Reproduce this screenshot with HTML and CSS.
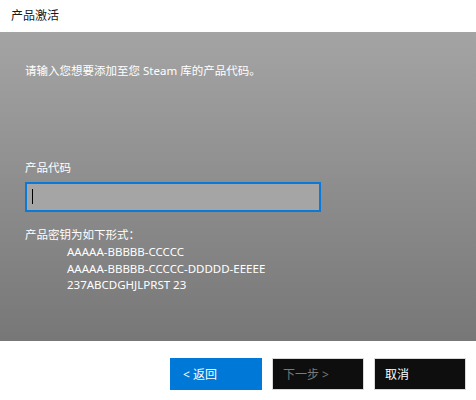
FILE: index.html
```html
<!DOCTYPE html>
<html lang="zh-CN">
<head>
<meta charset="utf-8">
<title>产品激活</title>
<link rel="stylesheet" href="styles.css">
</head>
<body>
<div class="dialog">
  <header class="titlebar">产品激活</header>
  <main class="content">
    <p class="intro">请输入您想要添加至您 Steam 库的产品代码。</p>
    <label class="field-label" for="code">产品代码</label>
    <div class="input-box"><span class="caret"></span></div>
    <p class="format-heading">产品密钥为如下形式：</p>
    <div class="formats">
      <div>AAAAA-BBBBB-CCCCC</div>
      <div>AAAAA-BBBBB-CCCCC-DDDDD-EEEEE</div>
      <div>237ABCDGHJLPRST 23</div>
    </div>
  </main>
  <footer class="actions">
    <button class="btn btn-primary">&lt; 返回</button>
    <button class="btn btn-dark btn-disabled">下一步 &gt;</button>
    <button class="btn btn-dark">取消</button>
  </footer>
</div>
</body>
</html>
```
FILE: styles.css
```css
* { box-sizing: border-box; }
html, body {
  margin: 0;
  padding: 0;
  background: #ffffff;
}
body {
  font-family: "Noto Sans", "Noto Sans CJK SC", sans-serif;
  font-size: 11.5px;
}
.dialog {
  width: 476px;
  height: 400px;
  display: flex;
  flex-direction: column;
}
.titlebar {
  height: 32px;
  padding: 8px 0 0 11px;
  line-height: 16px;
  color: #1a1a1a;
  background: #ffffff;
  font-size: 12px;
}
.content {
  height: 309px;
  background: linear-gradient(to bottom, #a4a4a4 0%, #777777 100%);
  padding: 31px 0 0 25px;
  color: #ffffff;
  display: flex;
  flex-direction: column;
}
.intro {
  margin: 0;
  line-height: 16px;
  height: 16px;
}
.field-label {
  display: block;
  margin-top: 81px;
  line-height: 16px;
  height: 16px;
}
.input-box {
  margin-top: 6px;
  width: 296px;
  height: 30px;
  border: 2px solid #0a79d8;
  background: #a5a5a5;
  padding: 5px 0 0 5px;
}
.caret {
  display: block;
  width: 1px;
  height: 15px;
  background: #000000;
}
.format-heading {
  margin: 15px 0 0 0;
  line-height: 16px;
  height: 16px;
}
.formats {
  padding-left: 42px;
  margin-top: 1px;
  line-height: 16.5px;
}
.actions {
  flex: 1;
  display: flex;
  justify-content: flex-end;
  align-items: flex-start;
  gap: 10px;
  padding: 17px 10px 0 0;
  background: #ffffff;
}
.btn {
  width: 92px;
  height: 32px;
  font-family: inherit;
  font-size: 12px;
  text-align: left;
  padding: 0 0 0 10px;
  border: 1px solid #d8d8d8;
  color: #ffffff;
  cursor: default;
}
.btn-primary {
  background: #0078d7;
  border-color: #0078d7;
  padding-left: 12px;
}
.btn-dark {
  background: #0e0e0e;
}
.btn-disabled {
  color: #7a7a7a;
}
```
